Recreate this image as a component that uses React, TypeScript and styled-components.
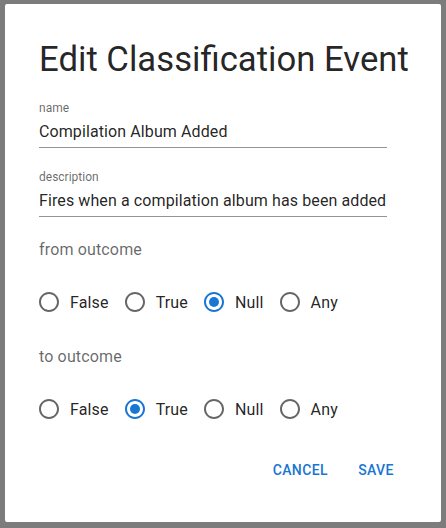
import styled, {createGlobalStyle} from "styled-components";

const GlobalStyle = createGlobalStyle`
  html, body {
    margin: 0;
    padding: 0;
    background: #7c7c7c;
    font-family: Roboto, "Liberation Sans", sans-serif;
  }
`;

const outcomes = ["False", "True", "Null", "Any"];

const Radio = ({checked}: { checked: boolean }) => (
    <RadioIcon viewBox="0 0 24 24" $checked={checked}>
        <path
            d="M12 2C6.48 2 2 6.48 2 12s4.48 10 10 10 10-4.48 10-10S17.52 2 12 2zm0 18c-4.42 0-8-3.58-8-8s3.58-8 8-8 8 3.58 8 8-3.58 8-8 8z"/>
        {checked && <circle cx="12" cy="12" r="5"/>}
    </RadioIcon>
);

const OutcomeGroup = ({label, value}: { label: string, value: string }) => (
    <>
        <GroupLabel>{label}</GroupLabel>
        <RadioRow>
            {outcomes.map((o) => (
                <RadioLabel key={o}>
                    <RadioBox><Radio checked={o === value}/></RadioBox>
                    <span>{o}</span>
                </RadioLabel>
            ))}
        </RadioRow>
    </>
);

export default function App() {
    return (
        <>
            <GlobalStyle/>
            <Dialog>
                <Title>Edit Classification Event</Title>
                <Content>
                    <Field>
                        <FieldLabel>name</FieldLabel>
                        <FieldValue>Compilation Album Added</FieldValue>
                    </Field>
                    <Field>
                        <FieldLabel>description</FieldLabel>
                        <FieldValue>Fires when a compilation album has been added</FieldValue>
                    </Field>
                    <OutcomeGroup label="from outcome" value="Null"/>
                    <OutcomeGroup label="to outcome" value="True"/>
                </Content>
                <Actions>
                    <TextButton>Cancel</TextButton>
                    <TextButton>Save</TextButton>
                </Actions>
            </Dialog>
        </>
    );
}

const Dialog = styled.div`
  margin: 4px 0 0 5px;
  width: 436px;
  height: 518px;
  background: #fff;
  border-radius: 2px;
  box-sizing: border-box;
  display: flex;
  flex-direction: column;
`;

const Title = styled.h2`
  margin: 0;
  padding: 35px 34px 0;
  font-size: 34.7px;
  font-weight: 400;
  line-height: 40px;
  white-space: nowrap;
  color: rgba(0, 0, 0, 0.87);
`;

const Content = styled.div`
  padding: 22px 34px 0;
  display: flex;
  flex-direction: column;
`;

const Field = styled.div`
  width: 348px;
  border-bottom: 1px solid rgba(0, 0, 0, 0.42);
  margin-bottom: 20px;

  & + & {
    margin-top: 2px;
    margin-bottom: 21px;
  }
`;

const FieldLabel = styled.div`
  font-size: 12px;
  line-height: 14px;
  color: rgba(0, 0, 0, 0.6);
`;

const FieldValue = styled.div`
  font-size: 16px;
  letter-spacing: 0.1px;
  line-height: 23px;
  padding: 5px 0 4px;
  color: rgba(0, 0, 0, 0.87);
  white-space: nowrap;
`;

const GroupLabel = styled.div`
  font-size: 16px;
  letter-spacing: 0.15px;
  line-height: 24px;
  color: rgba(0, 0, 0, 0.6);
`;

const RadioRow = styled.div`
  display: flex;
  margin: 19px 0 22px;
`;

const RadioLabel = styled.label`
  display: flex;
  align-items: center;
  margin-right: 16px;
  font-size: 16px;
  letter-spacing: 0.15px;
  color: rgba(0, 0, 0, 0.87);
`;

const RadioBox = styled.span`
  display: inline-flex;
  padding: 9px;
  margin-left: -11px;
`;

const RadioIcon = styled.svg<{ $checked: boolean }>`
  width: 24px;
  height: 24px;
  fill: ${p => p.$checked ? "#1976d2" : "rgba(0, 0, 0, 0.6)"};
`;

const Actions = styled.div`
  display: flex;
  justify-content: flex-end;
  gap: 8px;
  padding: 0 33px;
`;

const TextButton = styled.button`
  border: none;
  background: none;
  font-family: Roboto, "Liberation Sans", sans-serif;
  font-size: 14px;
  font-weight: 500;
  letter-spacing: 0.4px;
  text-transform: uppercase;
  color: #1976d2;
  min-width: 64px;
  padding: 6px 8px;
  line-height: 24px;
`;
